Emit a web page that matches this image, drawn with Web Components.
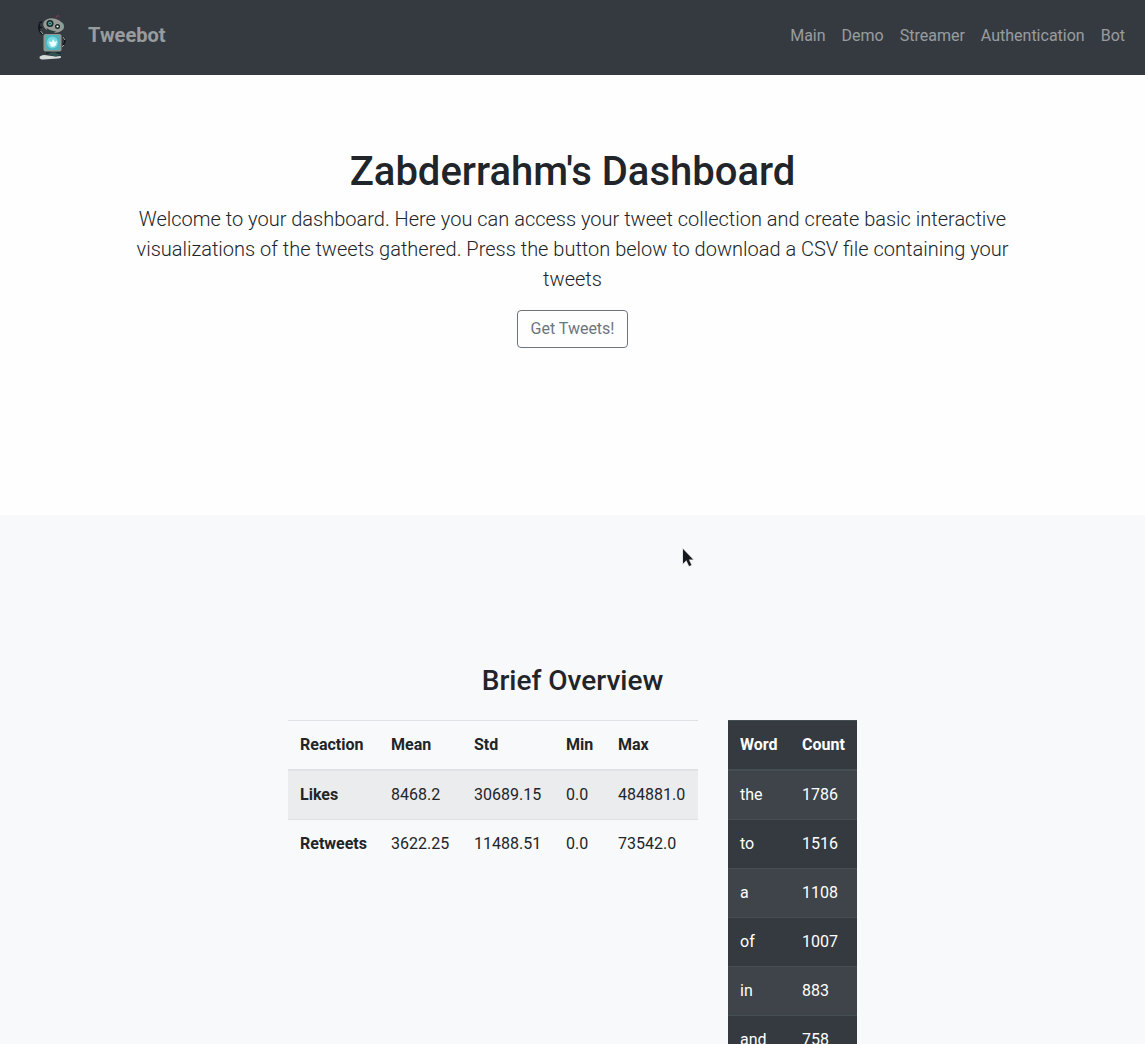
<!DOCTYPE html>
<html lang="en">
<head>
<meta charset="utf-8">
<title>Tweebot</title>
<style>
html,body{margin:0}
body{font:400 16px/1.5 Roboto,sans-serif;color:#212529;background:#f8f9fa;height:1044px;overflow:hidden}
</style>
</head>
<body>
<tb-navbar></tb-navbar>
<tb-hero>
  <span slot="title">Zabderrahm's Dashboard</span>
  <span slot="lead">Welcome to your dashboard. Here you can access your tweet collection and create basic interactive visualizations of the tweets gathered. Press the button below to download a CSV file containing your tweets</span>
  <tb-button slot="action">Get Tweets!</tb-button>
</tb-hero>
<tb-overview>
  <span slot="title">Brief Overview</span>
  <tb-table id="stats"></tb-table>
  <tb-table id="words" theme="dark"></tb-table>
</tb-overview>
<tb-pointer></tb-pointer>
<script>
function define(name, html) {
  customElements.define(name, class extends HTMLElement {
    constructor() { super(); this.attachShadow({mode:'open'}).innerHTML = html; }
  });
}

define('tb-logo', `<style>:host{display:block;width:32px;height:48px}svg{display:block}</style>
<svg width="32" height="48" viewBox="0 0 32 48">
 <path d="M3.500 43.500q0-2 5-2.500l11 1.500 5-.5q2 2-3 2.500l-14 1q-4 0-4-2z" fill="#d4dad6"/>
 <path d="M13 37l-2 3M21 38l3 3" stroke="#142e32" stroke-width="3.5"/>
 <path d="M11 40l6-1.500 8 2-5 2z" fill="#325553"/>
 <path d="M6.500 20Q1.500 17 3.500 10M3 9l3-1M3 14l3-1M27 23q4 4 0 8" fill="none" stroke="#10171b" stroke-width="1.6"/>
 <path d="M4.500 17l2.500 3M27 23l2 3M28 31l-2 2" stroke="#a0a59f" stroke-width="1"/>
 <path d="M20 4l1.500-2.500 2 1" fill="none" stroke="#713c4e" stroke-width="1.3"/>
 <ellipse cx="17.500" cy="11.500" rx="10.500" ry="7" transform="rotate(14 17.500 11.500)" fill="#979b93"/>
 <path d="M10.500 14q5 4 10 3l-3 2-6-1.500z" fill="#263e3d"/>
 <circle cx="14" cy="9.500" r="3.500" fill="#14292b"/><circle cx="14" cy="9.500" r="1.900" fill="#5eaaa1"/><circle cx="14" cy="9.500" r=".8" fill="#101c20"/>
 <circle cx="21.500" cy="12.500" r="2.500" fill="#142326"/><circle cx="21.500" cy="12.500" r="1.100" fill="#fff"/>
 <path d="M26 9q2.500 3 .5 6.500" fill="none" stroke="#69a5a2" stroke-width="1.2"/>
 <rect x="7.500" y="20" width="18" height="17.500" rx="2" fill="#929791"/>
 <rect x="10" y="21" width="13.500" height="15" rx="1" fill="#49b6c0"/>
 <ellipse cx="16.500" cy="28.500" rx="5.500" ry="6" fill="#77d9df"/>
 <path d="M13 27.500l3 .5 1-3 2 3 2-1-1 4q-2 3-6 1l1-1q-2-1-2-3.500z" fill="#efffff"/>
</svg>`);

define('tb-nav-link', `<style>:host{display:block;padding:8px;color:rgba(255,255,255,.5)}</style><slot></slot>`);

define('tb-navbar', `<style>
:host{display:flex;box-sizing:border-box;height:75px;background:#343a40;justify-content:space-between;padding:0 12px 0 36px}
.brand{display:flex;align-items:flex-start;gap:20px;padding-top:14px;color:rgba(255,255,255,.5);font-size:20px;font-weight:700;line-height:30px}
.name{padding-top:6px}
nav{display:flex;align-self:flex-start;padding-top:16px}
</style>
<div class="brand"><tb-logo></tb-logo><span class="name">Tweebot</span></div>
<nav><tb-nav-link>Main</tb-nav-link><tb-nav-link>Demo</tb-nav-link><tb-nav-link>Streamer</tb-nav-link><tb-nav-link>Authentication</tb-nav-link><tb-nav-link>Bot</tb-nav-link></nav>`);

define('tb-button', `<style>:host{display:inline-block}
button{display:block;box-sizing:border-box;width:111px;font:inherit;color:#6c757d;background:transparent;border:1px solid #6c757d;border-radius:4px;padding:6px 0;margin:0}</style>
<button><slot></slot></button>`);

define('tb-hero', `<style>
:host{display:block;box-sizing:border-box;height:440px;background:#fefefe;text-align:center;padding-top:73px}
.container{max-width:930px;margin:0 auto}
h1{font-size:40px;font-weight:500;line-height:48px;margin:0 0 8px}
p{font-size:20px;font-weight:300;line-height:30px;margin:0 0 16px}
</style>
<div class="container"><h1><slot name="title"></slot></h1><p><slot name="lead"></slot></p><slot name="action"></slot></div>`);

define('tb-overview', `<style>
:host{display:block;padding-top:149px;text-align:center}
h3{font-size:28px;font-weight:500;line-height:33.6px;margin:0 0 22.4px}
.tables{display:flex;justify-content:center;align-items:flex-start;gap:30px;text-align:left}
</style><h3><slot name="title"></slot></h3><div class="tables"><slot></slot></div>`);

customElements.define('tb-table', class extends HTMLElement {
  constructor() { super(); this.attachShadow({mode:'open'}); }
  set data({head, rows, rowHeads, widths}) {
    const firstTag = rowHeads ? 'th' : 'td';
    const total = widths.reduce((a, b) => a + b, 0);
    this.shadowRoot.innerHTML = `<style>
:host{display:block}
table{border-collapse:collapse;table-layout:fixed;width:${total}px;color:#212529}
th,td{padding:12px 0 12px 12px;border-top:1px solid #dee2e6;text-align:left;vertical-align:top}
th{font-weight:700}
thead th{border-bottom:2px solid #dee2e6;vertical-align:bottom}
tbody tr:nth-of-type(odd){background:rgba(0,0,0,.05)}
:host([theme=dark]) table{color:#fff;background:#343a40}
:host([theme=dark]) th,:host([theme=dark]) td{border-color:#454d55}
:host([theme=dark]) tbody tr:nth-of-type(odd){background:rgba(255,255,255,.05)}
</style><table><colgroup>${widths.map(w=>`<col style="width:${w}px">`).join('')}</colgroup><thead><tr>${head.map(h=>`<th>${h}</th>`).join('')}</tr></thead><tbody>${
 rows.map(r=>`<tr>${r.map((c,i)=>{const t=i?'td':firstTag;return `<${t}>${c}</${t}>`}).join('')}</tr>`).join('')}</tbody></table>`;
  }
});
document.getElementById('stats').data = {rowHeads:true, widths:[91,83,92,52,92], head:['Reaction','Mean','Std','Min','Max'],
  rows:[['Likes','8468.2','30689.15','0.0','484881.0'],['Retweets','3622.25','11488.51','0.0','73542.0']]};
document.getElementById('words').data = {widths:[62,67], head:['Word','Count'],
  rows:[['the','1786'],['to','1516'],['a','1108'],['of','1007'],['in','883'],['and','758']]};

define('tb-pointer', `<style>:host{position:absolute;left:681px;top:546px;pointer-events:none}svg{display:block}</style>
<svg width="16" height="24" viewBox="0 0 16 24"><path d="M2 3v14.500l3.400-3.200 2.700 5.700 2.300-1.100-2.600-5.400H12z" fill="#16191c" stroke="#d5d7dc" stroke-width="1.2" paint-order="stroke"/></svg>`);
</script>
</body>
</html>
